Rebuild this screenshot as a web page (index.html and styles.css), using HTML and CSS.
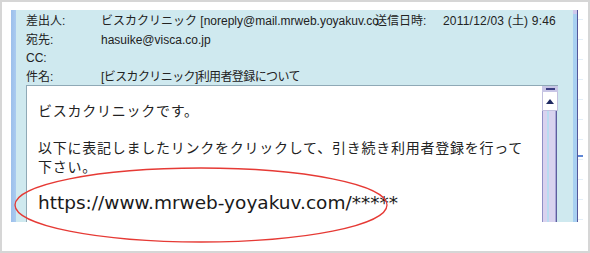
FILE: index.html
```html
<!DOCTYPE html>
<html lang="ja">
<head>
<meta charset="utf-8">
<title>メール画面</title>
<link rel="stylesheet" href="styles.css">
</head>
<body>
<div class="frame">
  <div class="window">
    <div class="lstripe"></div>
    <div class="main">
      <div class="header">
        <div class="row">
          <span class="label">差出人:</span>
          <span class="value from">ビスカクリニック [noreply@mail.mrweb.yoyakuv.co</span>
          <span class="dlabel">送信日時:</span>
          <span class="date">2011/12/03 (土) 9:46</span>
        </div>
        <div class="row">
          <span class="label">宛先:</span>
          <span class="value">hasuike@visca.co.jp</span>
        </div>
        <div class="row">
          <span class="label">CC:</span>
          <span class="value"></span>
        </div>
        <div class="row">
          <span class="label">件名:</span>
          <span class="value subject">[ビスカクリニック]利用者登録について</span>
        </div>
      </div>
      <div class="bodybox">
        <div class="content">
          <p class="line">ビスカクリニックです。</p>
          <p class="line gap">以下に表記しましたリンクをクリックして、引き続き利用者登録を行って<br>下さい。</p>
          <p class="url">https://www.mrweb-yoyakuv.com/*****</p>
        </div>
        <div class="scrollbar">
          <div class="sb-top"><span class="sb-grip"></span></div>
          <div class="sb-btn"><span class="sb-arrow"></span></div>
          <div class="sb-track"></div>
        </div>
      </div>
    </div>
    <div class="rstripe"></div>
    <div class="rline"></div>
  </div>
  <div class="ticks"></div>
  <svg class="circle" width="590" height="253" viewBox="0 0 590 253">
    <ellipse cx="199" cy="203" rx="186" ry="37" fill="none" stroke="#e63a35" stroke-width="1.3"/>
  </svg>
</div>
</body>
</html>
```
FILE: styles.css
```css
html, body {
  margin: 0;
  padding: 0;
  background: #ffffff;
}

.frame {
  position: relative;
  width: 590px;
  height: 253px;
  box-sizing: border-box;
  border: 2px solid #d6d6d6;
  padding: 8px 0 0 9px;
  display: flex;
  align-items: flex-start;
  font-family: "Liberation Sans", "Noto Sans CJK JP", sans-serif;
  color: #222222;
}

.window {
  display: flex;
  width: 567px;
  height: 212px;
  overflow: hidden;
}

.lstripe {
  width: 5px;
  background: linear-gradient(to right, #9cbfeb, #aacbf0);
}

.main {
  flex: 1;
  display: flex;
  flex-direction: column;
  background: #cfe9ef;
  padding: 0 15px 0 10px;
}

.rstripe {
  width: 4px;
  background: linear-gradient(to bottom, #cfc8ec 0 4px, #a8d0f1 4px);
}

.rline {
  width: 1px;
  background: #55589a;
}

.header {
  padding-top: 2px;
  font-size: 12px;
}

.row {
  display: flex;
  height: 18.5px;
  line-height: 18.5px;
  white-space: nowrap;
}

.label {
  width: 75px;
  flex: none;
}

.value {
  flex: none;
}

.from {
  width: 274px;
  overflow: visible;
}

.dlabel {
  width: 68px;
  flex: none;
}

.date {
  letter-spacing: 0.2px;
}

.subject {
  letter-spacing: -0.6px;
}

.bodybox {
  flex: 1;
  display: flex;
  margin-top: -1px;
  border-top: 1px solid #8fa9b6;
  border-left: 1px solid #8fa9b6;
  background: #ffffff;
}

.content {
  flex: 1;
  padding: 15px 0 0 11px;
}

.line {
  margin: 0;
  font-family: "Noto Sans CJK JP", sans-serif;
  font-size: 14px;
  line-height: 18.5px;
  letter-spacing: 0.75px;
  color: #222222;
}

.gap {
  margin-top: 18.5px;
}

.url {
  margin: 16px 0 0 0;
  font-family: "DejaVu Sans", sans-serif;
  font-size: 18.5px;
  line-height: 24px;
  color: #1a1a1a;
}

.scrollbar {
  width: 16px;
  display: flex;
  flex-direction: column;
}

.sb-top {
  height: 6px;
  background: #c8c6e6;
  display: flex;
  align-items: center;
  justify-content: center;
}

.sb-grip {
  width: 9px;
  height: 2px;
  background: #3b3d82;
}

.sb-btn {
  height: 18px;
  background: #ffffff;
  border: 1px solid #c2c0de;
  border-top: none;
  display: flex;
  align-items: center;
  justify-content: center;
}

.sb-arrow {
  width: 0;
  height: 0;
  border-left: 4px solid transparent;
  border-right: 4px solid transparent;
  border-bottom: 5px solid #1f2a60;
}

.sb-track {
  flex: 1;
  background: linear-gradient(to right,
    #8f8fc6 0 1px,
    #d9d3ef 1px 5px,
    #b9dcf1 5px 7px,
    #d9d3ef 7px 13px,
    #a9a6d6 13px 14px,
    #5e5e9e 14px 15px,
    #cfe9ef 15px 16px);
}

.ticks {
  width: 5px;
  height: 212px;
  background:
    linear-gradient(#5f87d6, #5f87d6) 0 145px / 5px 2px no-repeat,
    repeating-linear-gradient(to bottom, transparent 0 9px, #e2eef8 9px 10px, transparent 10px 20px);
}

.circle {
  position: absolute;
  left: 0;
  top: 0;
  pointer-events: none;
}
```
